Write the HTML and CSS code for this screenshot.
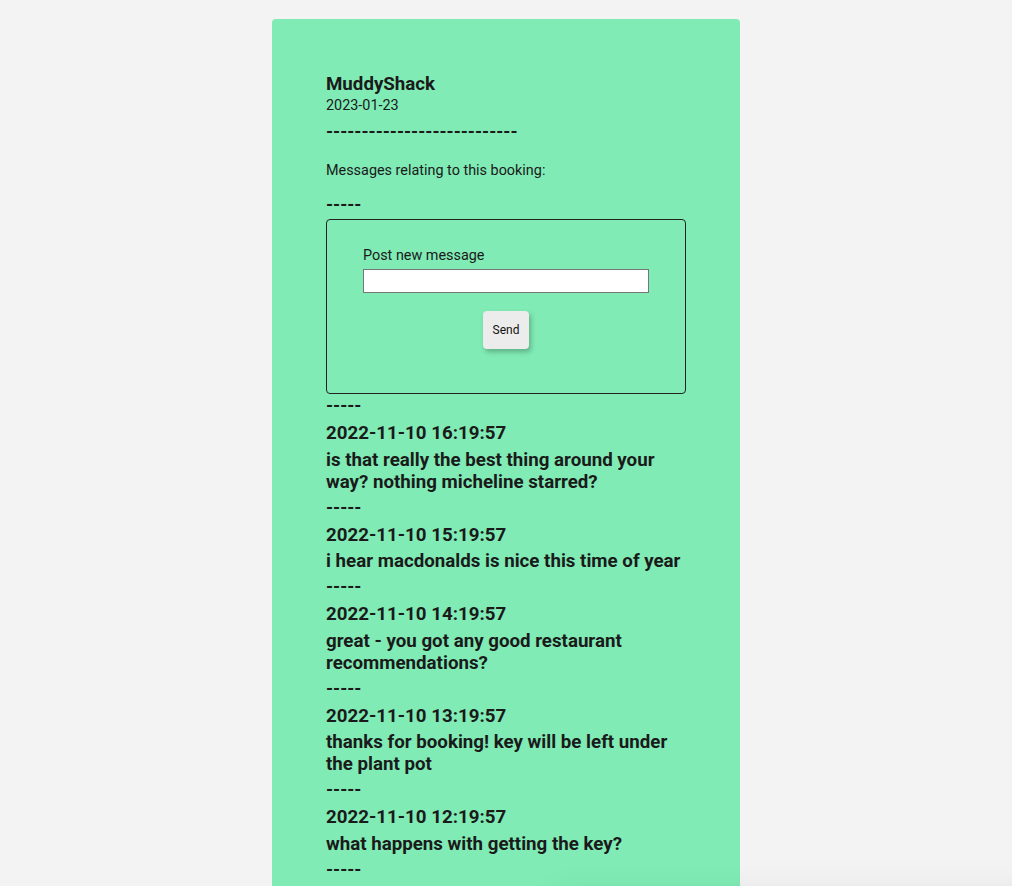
FILE: index.html
```html
<!DOCTYPE html>
<html>
<head>
<meta charset="utf-8">
<link rel="stylesheet" href="styles.css">
</head>
<body>
<main class="card">
  <div class="title">MuddyShack</div>
  <div class="date">2023-01-23</div>
  <div class="rule rule-long">---------------------------</div>
  <p class="intro">Messages relating to this booking:</p>
  <div class="rule rule-top">-----</div>
  <form class="post">
    <label class="post-label" for="msg">Post new message</label>
    <input class="post-input" id="msg" type="text">
    <div class="post-actions"><button class="send" type="button">Send</button></div>
  </form>
  <div class="rule rule-after">-----</div>
  <div class="msg">
    <div class="stamp">2022-11-10 16:19:57</div>
    <div class="text">is that really the best thing around your way? nothing micheline starred?</div>
  </div>
  <div class="rule">-----</div>
  <div class="msg">
    <div class="stamp">2022-11-10 15:19:57</div>
    <div class="text">i hear macdonalds is nice this time of year</div>
  </div>
  <div class="rule">-----</div>
  <div class="msg">
    <div class="stamp">2022-11-10 14:19:57</div>
    <div class="text">great - you got any good restaurant recommendations?</div>
  </div>
  <div class="rule">-----</div>
  <div class="msg">
    <div class="stamp">2022-11-10 13:19:57</div>
    <div class="text">thanks for booking! key will be left under the plant pot</div>
  </div>
  <div class="rule">-----</div>
  <div class="msg">
    <div class="stamp">2022-11-10 12:19:57</div>
    <div class="text">what happens with getting the key?</div>
  </div>
  <div class="rule">-----</div>
</main>
<div class="floating"></div>
</body>
</html>
```
FILE: styles.css
```css
html, body {
  margin: 0;
  padding: 0;
  background: #f3f3f3;
}
body {
  font-family: Roboto, "Liberation Sans", sans-serif;
  color: #1a1a1a;
  display: flex;
  justify-content: center;
  padding-top: 19px;
}
.card {
  width: 468px;
  box-sizing: border-box;
  background: #80ebb5;
  border-radius: 4px;
  padding: 54px 54px 40px 54px;
  min-height: 900px;
}
.title {
  font-size: 18.72px;
  font-weight: 700;
  line-height: 22px;
}
.date {
  font-size: 14.4px;
  line-height: 20px;
  margin-top: 1px;
}
.rule {
  font-size: 18px;
  font-weight: 700;
  line-height: 22px;
}
.rule-long {
  margin-top: 5px;
}
.intro {
  font-size: 14.4px;
  line-height: 20px;
  margin: 18px 0 0 0;
}
.rule-top {
  margin-top: 13px;
  margin-bottom: 3px;
}
.rule-after {
  margin-top: 1px;
}
.post {
  border: 1px solid #222;
  border-radius: 4px;
  height: 175px;
  box-sizing: border-box;
  padding: 27px 36px 0 36px;
}
.post-label {
  display: block;
  font-size: 14.4px;
  line-height: 18px;
}
.post-input {
  display: block;
  width: 286px;
  height: 24px;
  box-sizing: border-box;
  margin: 4px 0 0 0;
  border: 1px solid #767676;
  background: #fff;
  padding: 0 4px;
}
.post-actions {
  display: flex;
  justify-content: center;
  margin-top: 18px;
  width: 286px;
}
.send {
  width: 46px;
  height: 38px;
  border: none;
  border-radius: 4px;
  background: #ececec;
  font-family: Roboto, "Liberation Sans", sans-serif;
  font-size: 12px;
  color: #111;
  box-shadow: 2px 3px 5px rgba(0, 0, 0, 0.25);
  padding: 0;
}
.msg {
  padding: 5px 0 4px 0;
}
.stamp {
  font-size: 18.72px;
  font-weight: 700;
  line-height: 22px;
  margin-bottom: 4.5px;
}
.text {
  font-size: 18.72px;
  font-weight: 700;
  line-height: 22px;
}
.floating {
  position: fixed;
  left: 560px;
  right: -40px;
  top: 905px;
  height: 100px;
  background: #f3f3f3;
  box-shadow: 0 0 40px rgba(0, 0, 0, 0.18);
}
```
